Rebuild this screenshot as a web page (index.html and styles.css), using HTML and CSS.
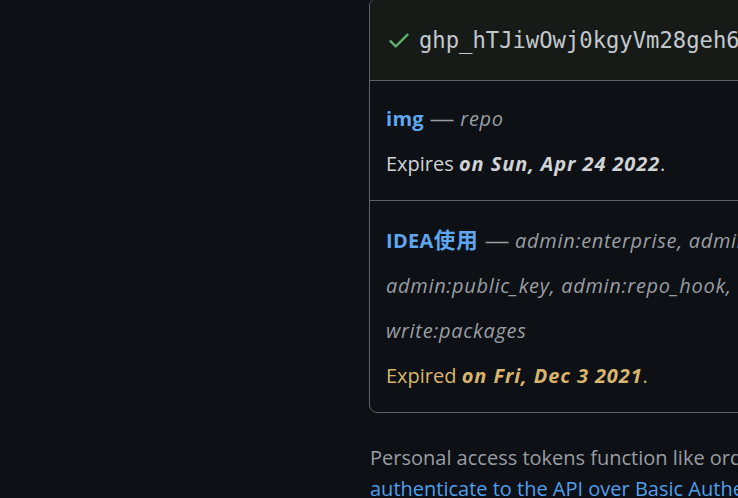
FILE: index.html
```html
<!DOCTYPE html>
<html lang="en">
<head>
<meta charset="utf-8">
<title>Personal access tokens</title>
<link rel="stylesheet" href="styles.css">
</head>
<body>
<div class="layout">
  <div class="sidebar"></div>
  <div class="main">
    <div class="box">
      <div class="row row-new">
        <svg class="check" viewBox="0 0 16 16" width="26" height="26" aria-hidden="true"><path d="M13.78 4.22a.75.75 0 0 1 0 1.06l-7.25 7.25a.75.75 0 0 1-1.06 0L2.22 9.28a.75.75 0 0 1 1.06-1.06L6 10.94l6.72-6.72a.75.75 0 0 1 1.06 0Z"/></svg>
        <code class="token">ghp_hTJiwOwj0kgyVm28geh6Xq3LfZ9aB1cD2eFgH</code>
      </div>
      <div class="row">
        <div class="line"><a class="name" href="#">img</a> <span class="dash">—</span> <em class="scopes">repo</em></div>
        <div class="line">Expires <strong><em>on Sun, Apr 24 2022</em></strong>.</div>
      </div>
      <div class="row row-last">
        <div class="line"><a class="name" href="#">IDEA<span class="cjk">使用</span></a> <span class="dash">—</span> <em class="scopes">admin:enterprise, admin:gpg_key, admin:org, admin:org_hook,</em></div>
        <div class="line"><em class="scopes">admin:public_key, admin:repo_hook, delete:packages, delete_repo, gist,</em></div>
        <div class="line"><em class="scopes">write:packages</em></div>
        <div class="line expired">Expired <strong><em>on Fri, Dec 3 2021</em></strong>.</div>
      </div>
    </div>
    <p class="note">Personal access tokens function like ordinary OAuth access tokens. They can be used instead of a password for Git over HTTPS, or can be used to<br><a href="#">authenticate to the API over Basic Authentication</a>.</p>
  </div>
</div>
</body>
</html>
```

FILE: styles.css
```css
html, body {
  margin: 0;
  padding: 0;
  overflow: hidden;
  background: #0d1014;
}
body {
  font-family: "Open Sans", "Noto Sans CJK SC", sans-serif;
  font-size: 20px;
  color: #d0d3d6;
}
.layout {
  display: flex;
  width: 1800px;
}
.sidebar {
  flex: none;
  width: 369px;
}
.main {
  flex: none;
  width: 1400px;
}
.box {
  margin-top: -2px;
  border: 1px solid #5d6064;
  border-radius: 8px;
  overflow: hidden;
}
.row {
  padding: 15px 16px 14px;
  border-top: 1px solid #5d6064;
  white-space: nowrap;
}
.row:first-child {
  border-top: none;
}
.row-last {
  padding: 16px 16px 14px;
}
.row-new {
  background: #171b18;
  display: flex;
  align-items: center;
  gap: 7px;
  height: 81px;
  box-sizing: border-box;
  padding: 0 16px 0 16px;
}
.check {
  fill: #5fae6c;
  flex: none;
}
.token {
  font-family: "DejaVu Sans Mono", monospace;
  font-size: 22.2px;
  color: #c3c8cd;
}
.line {
  line-height: 45px;
}
.name {
  color: #5ea6ef;
  font-weight: 700;
  text-decoration: none;
  letter-spacing: 0.3px;
}
.cjk {
  font-size: 21.5px;
  letter-spacing: 1px;
}
.dash {
  color: #9a9ea3;
  display: inline-block;
  transform: scaleX(1.25);
  margin: 0 3px;
}
.scopes {
  color: #9a9ea3;
  letter-spacing: 0.7px;
}
strong {
  font-weight: 700;
  letter-spacing: 0.9px;
}
.expired {
  color: #d8b56d;
}
.note {
  margin: 29px 0 0 1px;
  line-height: 31px;
  color: #999da2;
  white-space: nowrap;
}
.note a {
  color: #4f9fec;
  text-decoration: none;
}
```
